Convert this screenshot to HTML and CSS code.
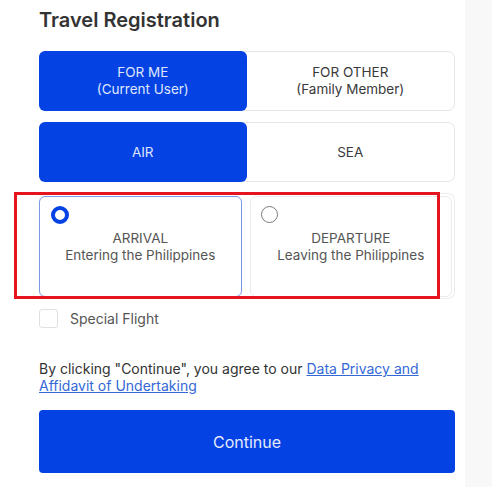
FILE: index.html
```html
<!DOCTYPE html>
<html>
<head>
<meta charset="utf-8">
<link rel="stylesheet" href="styles.css">
</head>
<body>
<div class="page">
  <main class="main">
    <h1 class="title">Travel Registration</h1>
    <div class="seg">
      <div class="seg-item active">FOR ME<br>(Current User)</div>
      <div class="seg-item">FOR OTHER<br>(Family Member)</div>
    </div>
    <div class="seg">
      <div class="seg-item active">AIR</div>
      <div class="seg-item">SEA</div>
    </div>
    <div class="cards">
      <div class="card selected">
        <span class="radio on"></span>
        <div class="card-text">ARRIVAL<br>Entering the Philippines</div>
      </div>
      <div class="card">
        <span class="radio"></span>
        <div class="card-text">DEPARTURE<br>Leaving the Philippines</div>
      </div>
      <div class="highlight"></div>
    </div>
    <label class="check">
      <span class="box"></span>
      <span>Special Flight</span>
    </label>
    <p class="agree">By clicking "Continue", you agree to our <a href="#">Data Privacy and</a><br><a href="#">Affidavit of Undertaking</a></p>
    <button class="continue">Continue</button>
  </main>
  <div class="side"></div>
</div>
</body>
</html>
```
FILE: styles.css
```css
html, body {
  margin: 0;
  padding: 0;
  background: #fff;
}
body {
  font-family: Inter, "Noto Sans", sans-serif;
  color: #444;
}
.page {
  display: flex;
  min-height: 487px;
}
.main {
  width: 416px;
  padding: 0 10px 0 39px;
  background: #fff;
}
.side {
  flex: 1;
  background: #f8f8f9;
}
.title {
  margin: 0;
  padding-top: 8px;
  font-size: 20px;
  line-height: 24px;
  font-weight: 600;
  color: #333;
  letter-spacing: 0;
}
.seg {
  display: flex;
  height: 60px;
  margin-top: 11px;
  border: 1px solid #e6e6e8;
  border-radius: 7px;
  box-sizing: border-box;
}
.title + .seg {
  margin-top: 19px;
}
.seg-item {
  flex: 1;
  display: flex;
  align-items: center;
  justify-content: center;
  text-align: center;
  font-size: 13.5px;
  line-height: 17px;
  color: #3a3a3a;
}
.seg-item.active {
  background: #0442e4;
  color: #dfe6fb;
  border-radius: 6px;
  margin: -1px 0 -1px -1px;
}
.cards {
  position: relative;
  display: flex;
  gap: 8px;
  height: 106px;
  margin-top: 11px;
  padding: 2px 2px 1px 0;
  box-sizing: border-box;
  border: 1px solid #ededee;
  border-left: none;
  border-radius: 7px;
}
.card {
  position: relative;
  flex: 1;
  display: flex;
  align-items: center;
  justify-content: center;
  border: 1px solid #ebebec;
  border-radius: 6px;
}
.card.selected {
  border-color: #7b98e6;
}
.card-text {
  text-align: center;
  font-size: 13.5px;
  line-height: 17px;
  color: #555;
}
.radio {
  position: absolute;
  left: 10px;
  top: 9px;
  width: 15px;
  height: 15px;
  border: 1.5px solid #7a7a7a;
  border-radius: 50%;
}
.radio.on {
  left: 11px;
  top: 9px;
  width: 10px;
  height: 10px;
  border: 4px solid #0442e4;
}
.highlight {
  position: absolute;
  left: -25px;
  top: -2px;
  width: 420px;
  height: 101px;
  border: 3px solid #e5141e;
  pointer-events: none;
}
.check {
  display: flex;
  align-items: center;
  gap: 12px;
  margin-top: 10px;
  font-size: 14px;
  color: #555;
}
.box {
  width: 17px;
  height: 17px;
  border: 1px solid #e0e0e2;
  border-radius: 3px;
}
.agree {
  margin: 32px 0 0;
  font-size: 14px;
  line-height: 17px;
  color: #333;
}
.agree a {
  color: #3468d6;
  text-decoration: underline;
}
.continue {
  display: block;
  width: 100%;
  height: 63px;
  margin-top: 16px;
  border: none;
  border-radius: 4px;
  background: #0442e4;
  color: #e4eafc;
  font-family: inherit;
  font-size: 16px;
}
```
